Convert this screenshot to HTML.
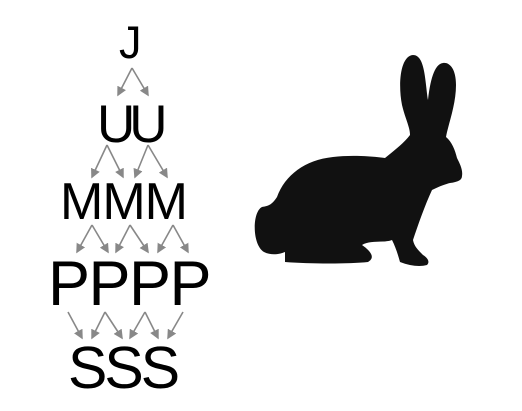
<!DOCTYPE html>
<html><head><style>
html,body{margin:0;padding:0;background:#fff;width:522px;height:411px;overflow:hidden}
.t{position:absolute;font-family:"Liberation Sans",sans-serif;color:#000;line-height:1;white-space:nowrap}
</style></head><body>
<div class="t" style="left:119px;top:20px;font-size:45px">J</div>
<div class="t" style="left:97px;top:98px;font-size:53px;letter-spacing:-6px">UU</div>
<div class="t" style="left:60px;top:176px;font-size:52px;letter-spacing:-1px">MMM</div>
<div class="t" style="left:48px;top:253px;font-size:63px;letter-spacing:-1.5px">PPPP</div>
<div class="t" style="left:68px;top:339px;font-size:59px;letter-spacing:-3px">SSS</div>
<svg width="522" height="411" style="position:absolute;left:0;top:0">
<defs><marker id="a" markerWidth="6" markerHeight="6" refX="5" refY="3" orient="auto"><path d="M0,0 L6,3 L0,6 Z" fill="#888"/></marker></defs>
<g stroke="#888" stroke-width="1.6" fill="none" marker-end="url(#a)">
<path d="M132,68 L118,95"/><path d="M132,68 L148,95"/>
<path d="M107,145 L92,177"/><path d="M107,145 L123,177"/>
<path d="M148,145 L135,177"/><path d="M148,145 L167,177"/>
<path d="M92,225 L77,252"/><path d="M92,225 L108,252"/>
<path d="M130,225 L116,252"/><path d="M130,225 L148,252"/>
<path d="M173,225 L158,252"/><path d="M173,225 L188,252"/>
<path d="M68,312 L82,338"/>
<path d="M105,312 L92,338"/><path d="M105,312 L122,338"/>
<path d="M145,312 L130,338"/><path d="M145,312 L158,338"/>
<path d="M183,312 L168,338"/>
</g>
<path fill="#111" d="M413,55 C400,56 398,85 402,105 C405,118 410,127 410,135 C405,142 395,150 385,158 C370,156 350,155 333,157 C305,160 285,175 277,197 C272,205 268,206 262,207 C252,212 252,245 264,252 C272,256 280,254 285,252 L285,262 C310,264 350,264 368,262 C375,258 372,252 362,245 C370,240 385,243 392,240 C396,248 398,255 400,262 C410,266 420,267 427,265 C430,262 428,258 423,255 C418,250 414,246 413,240 C418,225 425,205 432,190 C440,186 446,184 450,183 C458,182 462,180 462,176 C463,170 460,164 457,158 C455,150 452,142 446,137 C448,125 456,105 456,85 C456,68 449,62 443,63 C434,64 430,82 428,100 C425,80 425,55 413,55 Z"/>
</svg>
</body></html>
